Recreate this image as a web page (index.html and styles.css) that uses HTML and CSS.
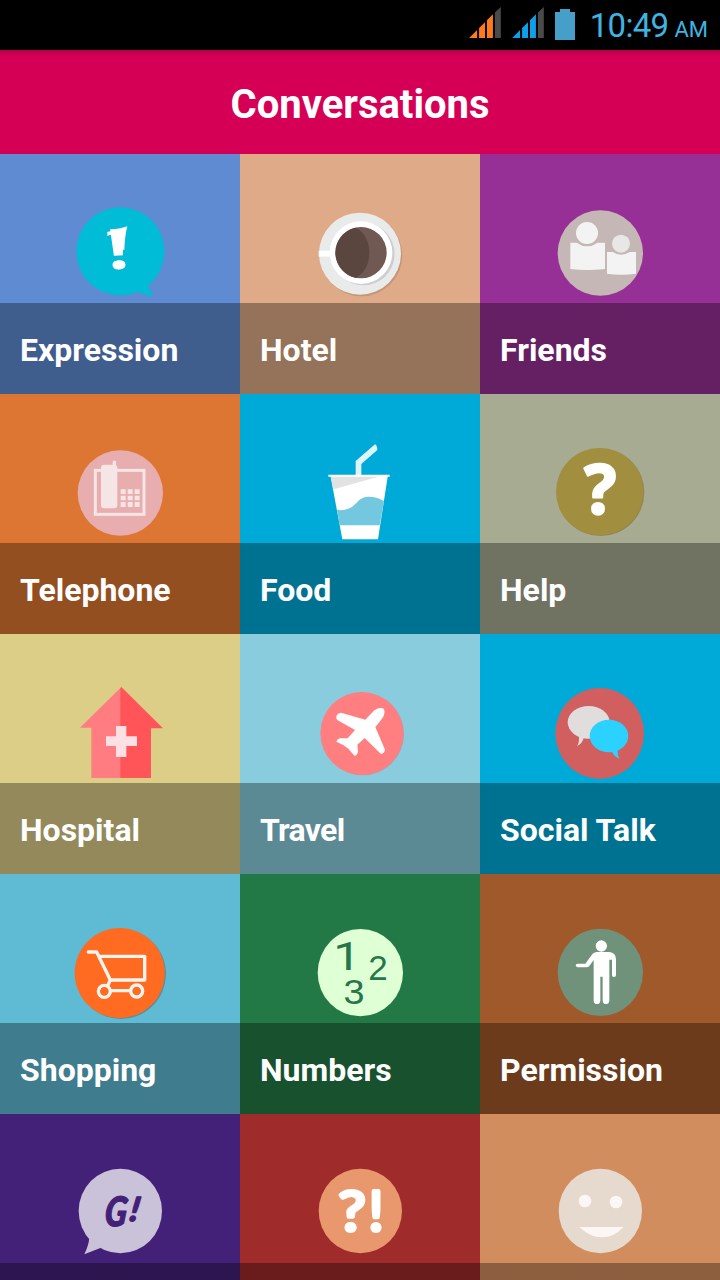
FILE: index.html
```html
<!DOCTYPE html>
<html lang="en">
  <head>
    <meta charset="UTF-8" />
    <meta name="viewport" content="width=device-width, initial-scale=1.0" />
    <title>Conversations</title>
    <link rel="stylesheet" href="styles.css">
  </head>
  <body>
    <div class="status-bar">
      <svg class="signal orange" viewBox="0 0 96 94">
        <path d="M0 94L24 70V94Z M30 64L48 46V94H30Z M54 40L72 22V94H54Z" />
        <path class="empty" d="M78 17L96 0V94H78Z" />
      </svg>
      <svg class="signal blue" viewBox="0 0 96 94">
        <path d="M0 94L24 70V94Z M30 64L48 46V94H30Z M54 40L72 22V94H54Z" />
        <path class="empty" d="M78 17L96 0V94H78Z" />
      </svg>
      <svg class="battery" viewBox="0 0 60 93">
        <path d="M15 0H45V9H60V93H0V9H15Z" />
      </svg>
      <span class="time">10:49</span>
      <span class="ampm">AM</span>
    </div>

    <header>
      <h1>Conversations</h1>
    </header>

    <main class="grid">
      <a class="tile expression">
        <svg class="icon" viewBox="0 -108 720 447">
          <path fill="#00bcd7" d="M446 276Q446 304 461 318Q434 318 406 300Z" />
          <circle cx="361" cy="184" r="132" fill="#00bcd7" />
          <path fill="#fff" d="M322 126L382 109Q374 140 373 180L340 170L335 136Q330 134 322 138Z" />
          <text x="0" y="0" class="bang" transform="translate(358 236) rotate(-4) scale(1.35 1)">!</text>
        </svg>
        <span class="label">Expression</span>
      </a>
      <a class="tile hotel">
        <svg class="icon" viewBox="0 -108 720 447">
          <circle cx="364" cy="196" r="123" fill="#b88d70" opacity=".7" />
          <circle cx="360" cy="191" r="123" fill="#e9eaea" />
          <circle cx="370" cy="192" r="94" fill="#cbcfd0" />
          <rect x="236" y="182" width="40" height="18" fill="#fff" />
          <circle cx="363" cy="188" r="94" fill="#fff" />
          <circle cx="363" cy="188" r="77" fill="#705953" />
          <path fill="#5a453f" d="M346 113A77 77 0 0 0 346 263C402 240 402 136 346 113Z" />
        </svg>
        <span class="label">Hotel</span>
      </a>
      <a class="tile friends">
        <svg class="icon" viewBox="0 -108 720 447">
          <circle cx="361" cy="189" r="128" fill="#c6b7b7" />
          <g fill="#f4f3f3">
            <circle cx="321" cy="129" r="33" />
            <path d="M271 158H290Q321 180 353 158H375V237Q323 243 271 237Z" />
            <circle cx="423" cy="161" r="27" fill="#e9e6e6" />
            <path d="M381 186H398Q423 203 449 186H468V251Q424 257 381 251Z" />
          </g>
        </svg>
        <span class="label">Friends</span>
      </a>

      <a class="tile telephone">
        <svg class="icon" viewBox="0 -108 720 447">
          <circle cx="361" cy="189" r="128" fill="#e8adae" />
          <rect x="286" y="121" width="146" height="132" fill="none" stroke="#f5e5e5" stroke-width="9" />
          <g fill="#f5e5e5">
            <rect x="303" y="104" width="49" height="131" rx="9" />
            <rect x="338" y="92" width="10" height="30" rx="4" />
            <path d="M362 178h15v14h-15z M383 178h15v14h-15z M404 178h15v14h-15z M362 197h15v14h-15z M383 197h15v14h-15z M404 197h15v14h-15z M362 216h15v15h-15z M383 216h15v15h-15z M404 216h15v15h-15z" />
          </g>
        </svg>
        <span class="label">Telephone</span>
      </a>
      <a class="tile food">
        <svg class="icon" viewBox="0 -108 720 447">
          <path fill="#dcf6fb" d="M347 136V93L405 43Q412 47 412 60L364 102V136Z" />
          <path fill="#fff" d="M265 134H449V140H443L414 328H307L272 140H265Z" />
          <path fill="#e2e2e2" d="M272 140H415L281 178Z" />
          <path fill="#73c8df" d="M291 240C352 245 345 200 386 200Q410 200 432 213L419 286H299Z" />
        </svg>
        <span class="label">Food</span>
      </a>
      <a class="tile help">
        <svg class="icon" viewBox="0 -108 720 447">
          <circle cx="362" cy="187" r="131" fill="#8f8753" />
          <circle cx="359" cy="185" r="131" fill="#a18e3f" />
          <text x="361" y="251" class="question">?</text>
        </svg>
        <span class="label">Help</span>
      </a>

      <a class="tile hospital">
        <svg class="icon" viewBox="0 -108 720 447">
          <path fill="#ff7c80" d="M364 51L240 173H274V324H364Z" />
          <path fill="#ff5558" d="M364 51L489 175H453V324H361V54Z" />
          <path fill="#fde0e3" d="M348 168H379V199H411V228H379V261H348V228H318V199H348Z" />
        </svg>
        <span class="label">Hospital</span>
      </a>
      <a class="tile travel">
        <svg class="icon" viewBox="0 -108 720 447">
          <circle cx="368" cy="192" r="124" fill="#d58f98" />
          <circle cx="365" cy="190" r="124" fill="#ff7f81" />
          <path fill="#fff" d="M289 140Q291 129 303 128L376 149L403 121Q417 111 429 115Q437 122 431 138Q425 149 406 171L435 239Q433 250 423 252L374 204L352 224L354 247Q351 256 344 258L325 236Q310 223 289 215Q292 206 300 205L323 205L345 180L293 151Q288 148 289 140Z" />
        </svg>
        <span class="label tight">Travel</span>
      </a>
      <a class="tile social">
        <svg class="icon" viewBox="0 -108 720 447">
          <ellipse cx="359" cy="190" rx="133" ry="136" fill="#d15f60" />
          <ellipse cx="326" cy="157" rx="63" ry="49" fill="#e1dddc" />
          <path fill="#e1dddc" d="M296 196Q300 215 291 229Q308 219 311 204Z" />
          <ellipse cx="387" cy="198" rx="58" ry="49" fill="#2bd2ff" />
          <path fill="#2bd2ff" d="M395 244Q402 260 419 267Q411 254 413 240Z" />
        </svg>
        <span class="label">Social Talk</span>
      </a>

      <a class="tile shopping">
        <svg class="icon" viewBox="0 -108 720 447">
          <circle cx="363" cy="192" r="135" fill="#6b8c8d" />
          <circle cx="359" cy="189" r="135" fill="#ff6b21" />
          <g fill="none" stroke="#fff5ee" stroke-width="10" stroke-linecap="round" stroke-linejoin="round">
            <path d="M265 126H290L331 210H434V139H301" />
            <path d="M331 210L323 227M333 242H390" />
            <circle cx="313" cy="244" r="18" />
            <circle cx="410" cy="243" r="18" />
          </g>
        </svg>
        <span class="label">Shopping</span>
      </a>
      <a class="tile numbers">
        <svg class="icon" viewBox="0 -108 720 447">
          <ellipse cx="361" cy="188" rx="128" ry="131" fill="#dfffd5" />
          <text x="0" y="0" class="digit one" transform="translate(321 181) scale(1.25 1)">1</text>
          <text x="414" y="210" class="digit two">2</text>
          <text x="0" y="0" class="digit three" transform="translate(342 282) scale(1.08 1)">3</text>
        </svg>
        <span class="label">Numbers</span>
      </a>
      <a class="tile permission">
        <svg class="icon" viewBox="0 -108 720 447">
          <ellipse cx="361" cy="187" rx="128" ry="131" fill="#70917a" />
          <g fill="#fff">
            <circle cx="364" cy="108" r="17" />
            <path d="M352 126H388Q408 128 408 148V195Q408 201 402 201Q396 201 396 195V149H388V272Q387 282 378 282Q369 282 368 272V200H361V272Q360 282 351 282Q342 282 341 272V150L328 168Q325 172 319 172H293Q287 171 287 166Q287 161 293 161H316L335 135Q341 126 352 126Z" />
          </g>
        </svg>
        <span class="label">Permission</span>
      </a>

      <a class="tile greeting">
        <svg class="icon" viewBox="0 12 720 447">
          <ellipse cx="361" cy="303" rx="125" ry="127" fill="#c9c2d8" />
          <path fill="#c9c2d8" d="M268 384Q266 406 253 433L303 413Z" />
          <text x="0" y="0" class="gee" transform="translate(344 348) skewX(-6) scale(0.8 1)">G</text>
          <text x="0" y="0" class="gee small" transform="translate(399 333) skewX(-10)">!</text>
        </svg>
        <span class="label"></span>
      </a>
      <a class="tile question-tile">
        <svg class="icon" viewBox="0 12 720 447">
          <ellipse cx="361" cy="303" rx="125" ry="127" fill="#e9976d" />
          <text x="0" y="0" class="asking" transform="translate(336 363) scale(1.1 1)">?</text>
          <text x="408" y="363" class="asking">!</text>
        </svg>
        <span class="label"></span>
      </a>
      <a class="tile smile">
        <svg class="icon" viewBox="0 12 720 447">
          <ellipse cx="361" cy="303" rx="125" ry="127" fill="#e6d9ce" />
          <g fill="#fcf7f5">
            <circle cx="315" cy="273" r="19" />
            <circle cx="408" cy="276" r="19" />
            <path d="M298 351H431Q401 382 367 382Q330 382 298 351Z" />
          </g>
        </svg>
        <span class="label"></span>
      </a>
    </main>
  </body>
</html>
```

FILE: styles.css
```css
* {
  margin: 0;
  padding: 0;
  box-sizing: border-box;
}

body {
  height: 1280px;
  overflow: hidden;
  background-color: #000;
  font-family: Roboto, sans-serif;
}

.status-bar {
  height: 50px;
  padding-right: 12px;
  display: flex;
  justify-content: flex-end;
  align-items: flex-start;
  background-color: #000;
  color: #3fb4e0;
}

.signal {
  width: 32px;
  height: 31px;
  margin-top: 7px;
  margin-right: 11px;
}

.orange {
  fill: #ff7a1a;
}

.blue {
  fill: #0f9ee8;
}

.signal .empty {
  fill: #4a4a4a;
}

.battery {
  width: 20px;
  height: 31px;
  margin-top: 9px;
  margin-right: 15px;
  fill: #469fc8;
}

.time {
  font-size: 33px;
  letter-spacing: -0.7px;
  line-height: 52px;
}

.ampm {
  margin-left: 6px;
  font-size: 22px;
  line-height: 60px;
}

header {
  height: 104px;
  display: flex;
  justify-content: center;
  align-items: center;
  background: linear-gradient(#b4004a, #d50055 6px);
}

h1 {
  padding-top: 4px;
  color: #fff;
  font-size: 40px;
  font-weight: bold;
}

.grid {
  display: grid;
  grid-template-columns: repeat(3, 240px);
  grid-template-rows: repeat(4, 240px) 166px;
}

.tile {
  display: flex;
  flex-direction: column;
}

.icon {
  width: 240px;
  height: 149px;
  flex-shrink: 0;
}

.label {
  flex: 1;
  padding-left: 20px;
  padding-top: 2px;
  background-color: rgba(0, 0, 0, 0.33);
  color: #fff;
  font-size: 32px;
  font-weight: bold;
  line-height: 91px;
  max-height: 91px;
  white-space: nowrap;
}

.tight {
  letter-spacing: -0.7px;
}

.expression { background-color: #5e8bd2; }
.hotel { background-color: #dfaa87; }
.friends { background-color: #973096; }
.telephone { background-color: #dd7632; }
.food { background-color: #00aad8; }
.help { background-color: #a7ab92; }
.hospital { background-color: #dccd87; }
.travel { background-color: #88ccdd; }
.social { background-color: #00aad8; }
.shopping { background-color: #5fbad3; }
.numbers { background-color: #237945; }
.permission { background-color: #a0592b; }
.greeting { background-color: #442178; }
.question-tile { background-color: #9f2b2b; }
.smile { background-color: #d28d5e; }

/* characters inside the icons */
.icon text {
  text-anchor: middle;
  fill: #fff;
}

.icon .bang {
  font: bold 168px "Open Sans", sans-serif;
}

.icon .question {
  font: bold 202px "Open Sans", sans-serif;
  stroke: #fff;
  stroke-width: 7px;
  stroke-linejoin: round;
}

.icon .digit {
  font-family: "Liberation Sans", sans-serif;
  fill: #26764a;
}

.icon .one {
  font-family: Roboto, sans-serif;
  font-size: 117px;
  font-weight: 400;
}

.icon .two {
  font-size: 105px;
}

.icon .three {
  font-size: 105px;
}

.icon .gee {
  font: italic 900 122px Lato, sans-serif;
  fill: #442178;
  stroke: #442178;
  stroke-width: 4px;
  stroke-linejoin: round;
}

.icon .small {
  font-size: 100px;
}

.icon .asking {
  font: 168px Lato, sans-serif;
  stroke: #fff;
  stroke-width: 12px;
  stroke-linejoin: round;
}
```
